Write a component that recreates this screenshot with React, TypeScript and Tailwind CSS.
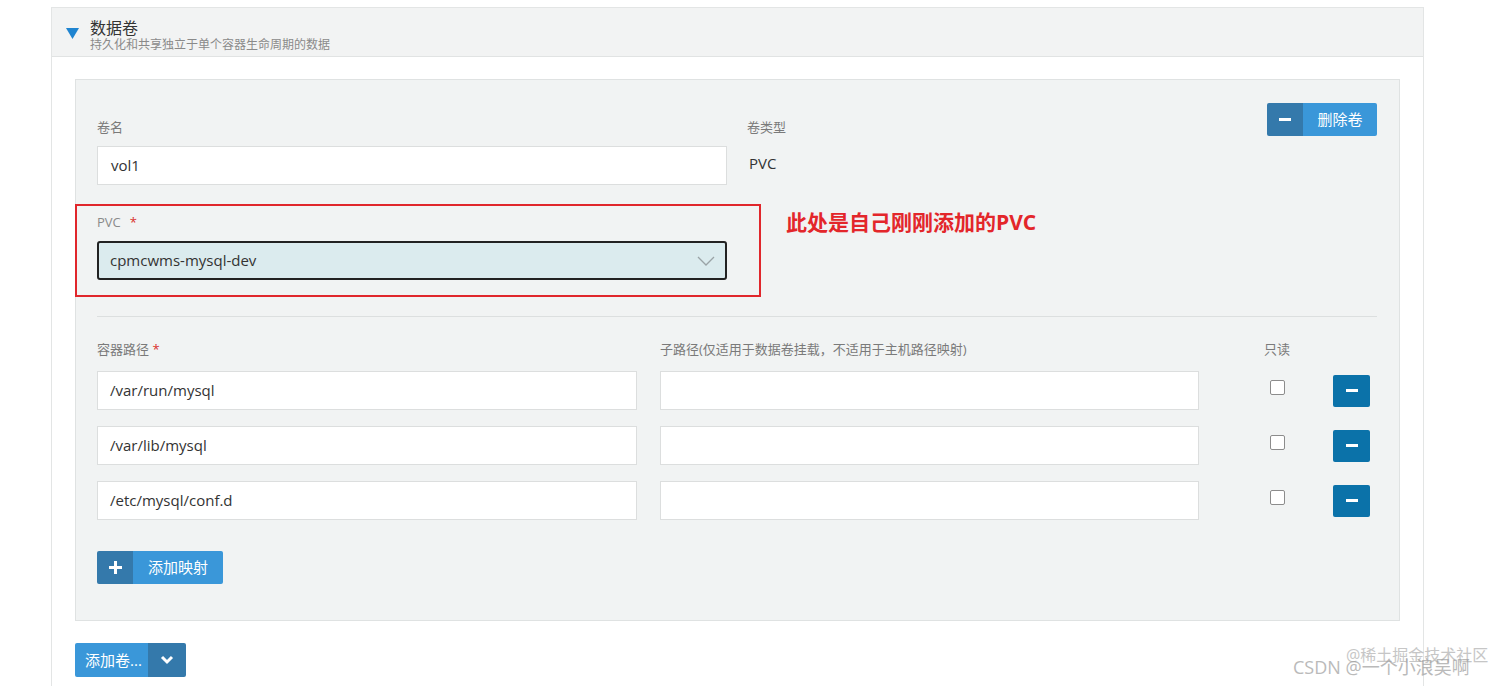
import React from 'react';

const FONT = { fontFamily: '"Open Sans", "Noto Sans CJK SC", sans-serif' };

const MinusIcon = () => <span className="block w-[12px] h-[3px] bg-white" />;

const PlusIcon = () => (
  <span className="relative block w-[13px] h-[13px]">
    <span className="absolute left-0 top-[5px] w-[13px] h-[3px] bg-white" />
    <span className="absolute left-[5px] top-0 w-[3px] h-[13px] bg-white" />
  </span>
);

const mounts = ['/var/run/mysql', '/var/lib/mysql', '/etc/mysql/conf.d'];

const App: React.FC = () => {
  return (
    <div className="relative w-[1512px] h-[686px] overflow-hidden bg-white text-[#333]" style={FONT}>
      <div className="ml-[51px] mt-[7px] w-[1373px] h-[700px] border border-[#e3e5e5] border-b-0">
        {/* header */}
        <div className="h-[49px] bg-[#f2f3f3] border-b border-[#e1e3e3] flex items-start pl-[14px] pt-[10px]">
          <svg width="13" height="11" viewBox="0 0 13 11" className="mt-[10px]">
            <polygon points="0,0 13,0 6.5,11" fill="#1f84d0" />
          </svg>
          <div className="ml-[11px] flex flex-col">
            <span className="text-[16px] leading-[20px] text-[#333]">数据卷</span>
            <span className="text-[12px] leading-[14px] text-[#8a8a8a]">持久化和共享独立于单个容器生命周期的数据</span>
          </div>
        </div>

        {/* body */}
        <div className="px-[23px] pt-[22px]">
          <div className="bg-[#f1f3f3] border border-[#dfe2e2] pl-[21px] pr-[22px] pt-[23px] pb-[36px]">
            {/* name / type row */}
            <div className="flex items-start">
              <div className="w-[630px] pt-[14px]">
                <div className="text-[13px] leading-[20px] text-[#7a7a7a]">卷名</div>
                <div className="mt-[9px] h-[39px] bg-white border border-[#dcdede] flex items-center px-[13px] text-[15px]">vol1</div>
              </div>
              <div className="ml-[20px] pt-[14px]">
                <div className="text-[13px] leading-[20px] text-[#7a7a7a]">卷类型</div>
                <div className="mt-[15px] ml-[2px] text-[15px] leading-[22px]">PVC</div>
              </div>
              <button className="ml-auto flex h-[33px] rounded-[2px] overflow-hidden text-white text-[15px]">
                <span className="w-[36px] h-full bg-[#3479ab] flex items-center justify-center">
                  <MinusIcon />
                </span>
                <span className="w-[74px] h-full bg-[#3a97d9] flex items-center justify-center">删除卷</span>
              </button>
            </div>

            {/* PVC select */}
            <div className="relative mt-[27px] flex items-start">
              <div className="w-[630px]">
                <div className="text-[13px] leading-[20px] text-[#8a8a8a]">
                  PVC<span className="ml-[9px] text-[#d9302c]">*</span>
                </div>
                <div className="mt-[9px] h-[39px] bg-[#dbebee] border-2 border-[#222] rounded-[3px] flex items-center justify-between pl-[11px] pr-[10px] text-[15px]">
                  <span>cpmcwms-mysql-dev</span>
                  <svg width="18" height="10" viewBox="0 0 18 10" fill="none">
                    <path d="M1 1 L9 9 L17 1" stroke="#9aa3a6" strokeWidth="1.3" />
                  </svg>
                </div>
              </div>
              <div className="ml-[59px] -mt-[3px] text-[21px] leading-[26px] font-bold text-[#e3262a]">此处是自己刚刚添加的PVC</div>
              <div className="absolute -left-[22px] -top-[8px] w-[686px] h-[93px] border-2 border-[#e0262b] pointer-events-none" />
            </div>

            <div className="mt-[36px] h-px bg-[#dcdfdf]" />

            {/* mounts */}
            <div className="mt-[22px] flex text-[13px] leading-[20px] text-[#7a7a7a]">
              <div className="w-[540px]">
                容器路径 <span className="text-[#d9302c]">*</span>
              </div>
              <div className="ml-[23px] w-[539px]">子路径(仅适用于数据卷挂载，不适用于主机路径映射)</div>
              <div className="ml-[65px]">只读</div>
            </div>
            <div className="mt-[12px] flex flex-col gap-[16px]">
              {mounts.map((m) => (
                <div key={m} className="flex items-center">
                  <div className="w-[540px] h-[39px] bg-white border border-[#dcdede] flex items-center px-[12px] text-[15px]">{m}</div>
                  <div className="ml-[23px] w-[539px] h-[39px] bg-white border border-[#dcdede]" />
                  <div className="ml-[71px] -mt-[6px] w-[15px] h-[15px] rounded-[2px] border border-[#8c8c8c] bg-white" />
                  <button className="ml-[48px] w-[37px] h-[32px] rounded-[2px] bg-[#0b72a9] flex items-center justify-center">
                    <MinusIcon />
                  </button>
                </div>
              ))}
            </div>

            <button className="mt-[31px] flex h-[33px] rounded-[2px] overflow-hidden text-white text-[15px]">
              <span className="w-[36px] h-full bg-[#3479ab] flex items-center justify-center">
                <PlusIcon />
              </span>
              <span className="w-[90px] h-full bg-[#3a97d9] flex items-center justify-center">添加映射</span>
            </button>
          </div>

          <button className="mt-[22px] flex h-[34px] rounded-[2px] overflow-hidden text-white text-[15px]">
            <span className="w-[73px] h-full bg-[#3a97d9] flex items-center pl-[10px]">添加卷...</span>
            <span className="w-[38px] h-full bg-[#3479ab] flex items-center justify-center">
              <svg width="14" height="10" viewBox="0 0 14 10" fill="none">
                <path d="M2 2 L7 7 L12 2" stroke="white" strokeWidth="3" />
              </svg>
            </span>
          </button>
        </div>
      </div>

      {/* watermarks */}
      <div className="absolute left-[1346px] top-[644px] text-[16px] leading-[22px] text-[#b9b9b9] opacity-80">@稀土掘金技术社区</div>
      <div className="absolute left-[1293px] top-[655px] text-[18px] leading-[24px] text-[#9d9d9d] opacity-70">CSDN @一个小浪吴啊</div>
    </div>
  );
};

export default App;
